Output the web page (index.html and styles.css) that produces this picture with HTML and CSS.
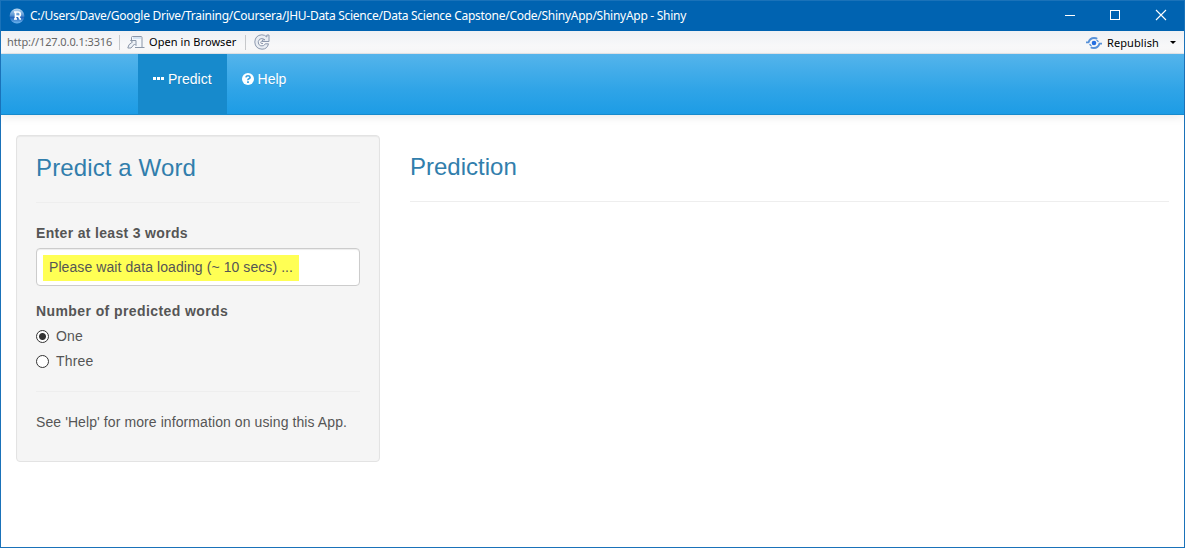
FILE: index.html
```html
<!DOCTYPE html>
<html lang="en">
<head>
<meta charset="utf-8">
<title>ShinyApp - Shiny</title>
<link rel="stylesheet" href="styles.css">
</head>
<body>
<div class="window">
  <header class="titlebar">
    <svg class="logo" width="16" height="16" viewBox="0 0 16 16">
      <defs><linearGradient id="orb" x1="0" y1="0" x2="0" y2="1"><stop offset="0" stop-color="#b9d8f2"/><stop offset=".45" stop-color="#5b96d4"/><stop offset=".6" stop-color="#2566bd"/><stop offset="1" stop-color="#6cb6ef"/></linearGradient></defs>
      <circle cx="8" cy="8" r="7.4" fill="url(#orb)"/>
      <path d="M5 4h4q2.300 0 2.300 2.200T9.500 8.300L11 11h1M6.500 4v7M5 11h3M6.500 8.200h3" fill="none" stroke="#fff" stroke-width="1.700"/>
    </svg>
    <span class="path">C:/Users/Dave/Google Drive/Training/Coursera/JHU-Data Science/Data Science Capstone/Code/ShinyApp/ShinyApp - Shiny</span>
    <svg class="controls" width="98" height="12" viewBox="0 0 98 12" fill="none" stroke="#fff">
      <path d="M0 6.500h10"/><rect x="45.500" y="1.500" width="9" height="9"/><path d="M91 1l10 10M101 1l-10 10" stroke-width="1.100"/>
    </svg>
  </header>
  <div class="toolbar">
    <span class="url">http://127.0.0.1:3316</span>
    <i class="sep"></i>
    <svg class="open-icon" width="18" height="13" viewBox="0 0 18 13" fill="none" stroke="#8a96a8">
      <path d="M4.500 5V1.500q0-1 1-1h8.500q1 0 1 1v10H8" fill="#f5f8fc"/><path d="M6 2h8" stroke="#b5cfea"/><path d="M15 11.500h2.500"/>
      <path d="M3.500 4.500H9v5L7.500 8 4 12H.8q0-3.500 4.700-6z" fill="#eef2f7"/>
    </svg>
    <span class="open">Open in Browser</span>
    <i class="sep sep-two"></i>
    <svg class="reload" width="16" height="16" viewBox="0 0 16 16">
      <path d="M15 1v6.500H8.500V5.800H11Q8.300 3.400 5.600 5.200 3.300 7.600 4.700 10.300 6.500 12.700 9.300 11.700 10.700 11 11.300 9.800h3.200Q13.300 15.200 8 15.200 1.100 14.700.8 8 1.200 1.300 7.800.8 10.800.8 12.800 3V1z" fill="#e9edf3" stroke="#8c98ad"/>
      <path d="M9.500 7.500Q7 6.500 6.700 8.200T9 9.500" fill="none" stroke="#8c98ad"/>
    </svg>
    <div class="republish">
      <svg width="16" height="12" viewBox="0 0 16 12" fill="none" stroke="#5791d8" stroke-width="1.900">
        <path d="M0 5.400h2.500Q4 1 8 1q2.200 0 3.200.8M16 6.600h-2.500Q12 11 8 11q-2.200 0-3.200-.8"/><path d="M10.500 3q1.500.8 1.800 2M5.500 9Q4 8.200 3.700 7" stroke-width="1.300"/><circle cx="8" cy="6" r="2.300" fill="#256fe0" stroke="none"/>
      </svg>
      <span class="republish-text">Republish</span><i class="caret"></i>
    </div>
  </div>
  <nav class="navbar">
    <a class="tab active"><svg class="dots" width="12" height="4" viewBox="0 0 12 4"><path d="M0 0h3v3H0zM4 0h3v3H4zM8 0h3v3H8z" fill="#fff"/></svg><span>Predict</span></a>
    <a class="tab"><svg class="question" width="12" height="12" viewBox="0 0 12 12"><circle cx="6" cy="6" r="6" fill="#fff"/><path d="M3.900 4.400Q4.100 2.700 6 2.700T8.100 4.400Q8.100 5.200 6.900 5.800T6 7.300" fill="none" stroke="#37a1e2" stroke-width="1.600"/><path d="M5.100 8.200h1.800v1.700H5.100z" fill="#37a1e2"/></svg><span>Help</span></a>
  </nav>
  <main class="content">
    <section class="well">
      <h3 class="wide">Predict a Word</h3>
      <hr>
      <div class="label">Enter at least 3 words</div>
      <div class="field"><span class="value">Please wait data loading (~ 10 secs) ...</span></div>
      <div class="label count-label">Number of predicted words</div>
      <div class="option"><i class="radio checked"></i><span>One</span></div>
      <div class="option"><i class="radio"></i><span>Three</span></div>
      <hr class="lower">
      <p>See 'Help' for more information on using this App.</p>
    </section>
    <section class="result">
      <h3>Prediction</h3>
      <hr>
    </section>
  </main>
</div>
</body>
</html>
```
FILE: styles.css
```css
* { box-sizing: border-box; }
body { margin: 0; background: #fff; color: #555; font: 14px/20px "Liberation Sans", Arial, sans-serif; }
.window { height: 548px; border: 1px solid #1a72b9; overflow: hidden; background: #fff; }
.titlebar { height: 30px; background: #0063b1; display: flex; align-items: center; padding: 0 21px 0 8px; color: #fff; font: 12px/16px "Noto Sans", sans-serif; }
.logo { margin-top: -1px; }
.path { margin-left: 5px; white-space: nowrap; letter-spacing: -0.27px; }
.controls { margin: -2px 0 0 auto; overflow: visible; }
.toolbar { height: 23px; display: flex; align-items: center; padding: 0 8px 0 6px; background: linear-gradient(#eff1f4, #fcfcfc); border-bottom: 1px solid #e6eaee; color: #000; font: 11px/16px "Noto Sans", sans-serif; white-space: nowrap; }
.url { color: #666; width: 105px; letter-spacing: -0.1px; }
.sep { width: 1px; height: 15px; background: #c6c8cb; margin: 0 7px; }
.open { width: 89px; margin-left: 4px; letter-spacing: 0.07px; }
.sep-two { margin-right: 8px; }
.republish { margin-left: auto; display: flex; align-items: center; padding-top: 1px; }
.republish-text { margin-left: 5px; width: 53px; letter-spacing: 0.1px; }
.caret { margin-left: 10px; border: 3px solid transparent; border-top-color: #000; border-bottom: 0; }
.navbar { height: 61px; display: flex; padding-left: 137px; background: linear-gradient(#54b4eb, #2fa4e7 60%, #1d9ce5); border-bottom: 1px solid #178acc; box-shadow: 0 1px 10px rgba(0,0,0,.1); color: #fff; }
.tab { display: flex; align-items: flex-start; padding: 15px; text-shadow: 0 1px 0 rgba(0,0,0,.1); }
.tab span { margin-left: 3px; }
.tab .question + span { margin-left: 4px; }
.active { background: #178acc; }
.dots { margin-top: 8px; }
.question { margin-top: 4px; }
.content { display: flex; padding: 20px 15px; gap: 30px; }
.well { width: 364px; height: 327px; padding: 19px; background: #f5f5f5; border: 1px solid #e3e3e3; border-radius: 4px; box-shadow: inset 0 1px 1px rgba(0,0,0,.05); }
h3 { margin: 0; color: #317eac; font-size: 24px; font-weight: 500; line-height: 26px; }
.wide { letter-spacing: 0.12px; }
hr { height: 1px; border: 0; background: #eee; margin: 21px 0 20px; }
.label { font-weight: bold; letter-spacing: 0.33px; }
.field { height: 38px; margin-top: 5px; padding: 6px; border: 1px solid #ccc; border-radius: 4px; background: #fff; box-shadow: inset 0 1px 1px rgba(0,0,0,.075); }
.value { display: block; width: 256px; height: 26px; padding: 2px 6px; background: #ffff54; white-space: nowrap; letter-spacing: 0.08px; }
.count-label { margin-top: 15px; margin-bottom: 5px; letter-spacing: 0.41px; }
.option { display: flex; align-items: center; height: 20px; margin-bottom: 5px; letter-spacing: 0.2px; }
.radio { width: 13px; height: 13px; margin-right: 7px; border: 1px solid #333; border-radius: 50%; background: #fff; }
.checked { background: radial-gradient(circle, #333 3px, #fff 4px); }
.lower { margin-top: 20px; margin-bottom: 20px; }
p { margin: 0; white-space: nowrap; letter-spacing: 0.09px; }
.result { flex: 1; padding-top: 19px; }
.result h3 { line-height: 26px; }
```
